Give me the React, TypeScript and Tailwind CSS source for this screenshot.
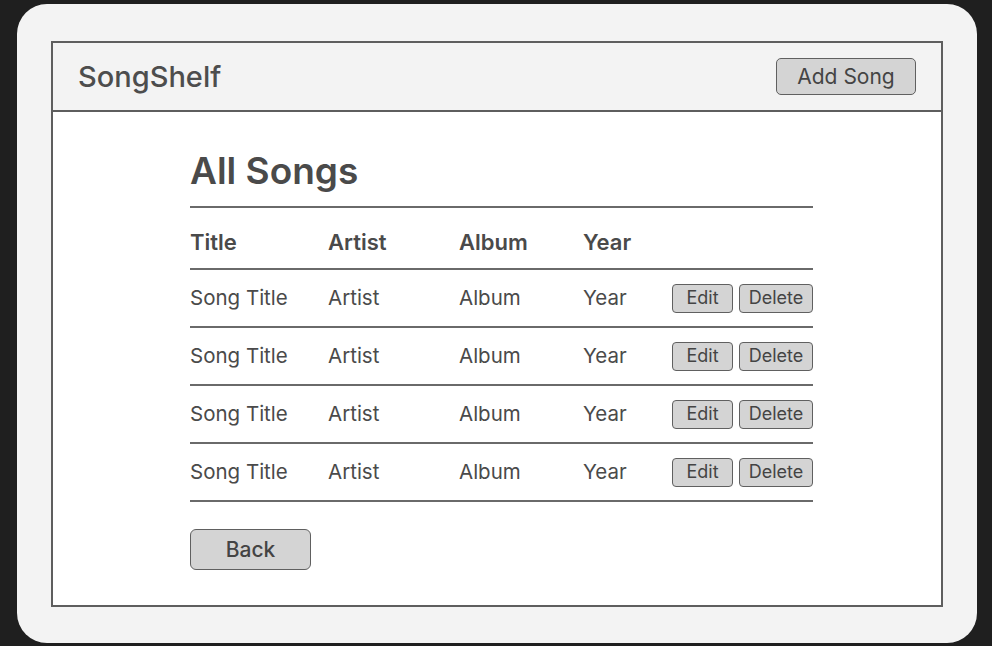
const songs = [
  { title: "Song Title", artist: "Artist", album: "Album", year: "Year" },
  { title: "Song Title", artist: "Artist", album: "Album", year: "Year" },
  { title: "Song Title", artist: "Artist", album: "Album", year: "Year" },
  { title: "Song Title", artist: "Artist", album: "Album", year: "Year" },
];

const cols = "grid grid-cols-[138px_131px_124px_89px_1fr]";

function SmallButton({ label, width }: { label: string; width: string }) {
  return (
    <button
      className={`${width} h-[29px] rounded-[4px] border-[1.5px] border-[#606060] bg-[#d4d4d4] text-[18px] leading-none text-[#444]`}
    >
      {label}
    </button>
  );
}

export default function App() {
  return (
    <div
      className="h-[646px] w-[992px] overflow-hidden bg-[#1f1f1f] pt-[4px] pl-[17px]"
      style={{ fontFamily: "Inter, 'Noto Sans', sans-serif" }}
    >
      <div className="h-[639px] w-[960px] rounded-[30px] bg-[#f3f3f3] pt-[37px] pl-[34px]">
        <div className="flex h-[566px] w-[892px] flex-col border-2 border-[#5e5e5e] bg-white text-[#4a4a4a]">
          {/* header */}
          <header className="flex h-[69px] items-center justify-between border-b-2 border-[#5e5e5e] bg-[#f3f3f3] px-[25px]">
            <h1 className="text-[29px] font-medium leading-none text-[#4d4d4d]">SongShelf</h1>
            <button className="h-[37px] w-[140px] rounded-[5px] border-[1.5px] border-[#606060] bg-[#d4d4d4] text-[21px] leading-none text-[#444]">
              Add Song
            </button>
          </header>

          {/* content */}
          <main className="ml-[137px] w-[623px] pt-[37px]">
            <h2 className="border-b-2 border-[#6a6a6a] pb-[13px] text-[37px] font-semibold leading-[44px]">
              All Songs
            </h2>
            <div className={`${cols} h-[62px] border-b-2 border-[#6a6a6a] pt-[21px] text-[22px] font-semibold leading-[27px]`}>
              <div>Title</div>
              <div>Artist</div>
              <div>Album</div>
              <div>Year</div>
              <div />
            </div>
            {songs.map((s, i) => (
              <div
                key={i}
                className={`${cols} h-[58px] items-center border-b-2 border-[#6a6a6a] text-[20.5px]`}
              >
                <div>{s.title}</div>
                <div>{s.artist}</div>
                <div>{s.album}</div>
                <div>{s.year}</div>
                <div className="flex justify-end gap-[6px]">
                  <SmallButton label="Edit" width="w-[61px]" />
                  <SmallButton label="Delete" width="w-[74px]" />
                </div>
              </div>
            ))}
            <button className="mt-[27px] h-[41px] w-[121px] rounded-[6px] border-[1.5px] border-[#606060] bg-[#d4d4d4] text-[21px] font-medium leading-none text-[#444]">
              Back
            </button>
          </main>
        </div>
      </div>
    </div>
  );
}
